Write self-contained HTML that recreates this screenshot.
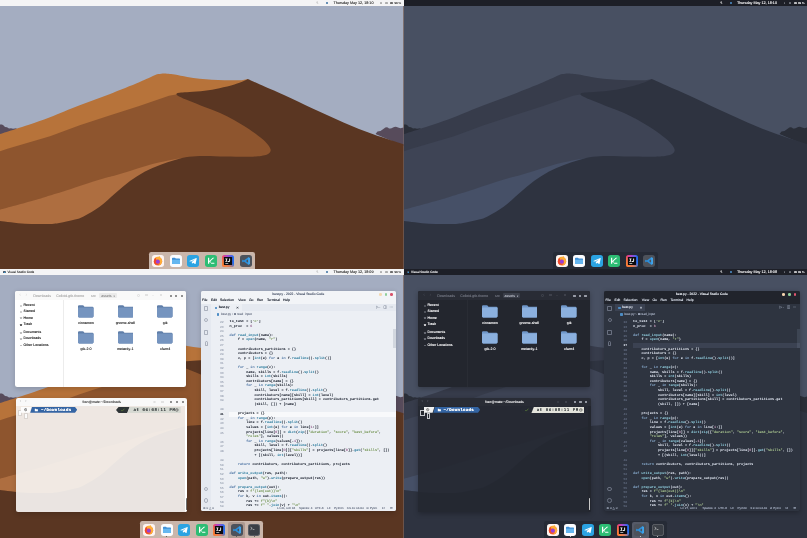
<!DOCTYPE html>
<html lang="en"><head><meta charset="utf-8"><title>Colloid desktop</title>
<style>
*{box-sizing:border-box;margin:0;padding:0}
html,body{width:807px;height:538px;overflow:hidden;background:#5a3622;font-family:"Liberation Sans",sans-serif}
#root{position:absolute;left:0;top:0;width:807px;height:538px;will-change:transform;overflow:hidden;text-rendering:geometricPrecision}
.q{position:absolute;width:403.5px;height:269px;overflow:hidden}
.q.tl{left:0;top:0}.q.tr{left:403.5px;top:0}.q.bl{left:0;top:269px}.q.br{left:403.5px;top:269px}
.wp{position:absolute;left:0;top:0;width:403.5px;height:269px;display:block}
.tb{position:absolute;left:0;top:0;width:403.5px;height:5.6px;background:var(--bar);color:var(--bartext);font-size:3.72px;line-height:7.3px;white-space:nowrap;overflow:hidden;text-shadow:0 0 0.25px currentColor}
.tb span,.tb i,.tb svg{position:absolute;top:0}
.tb-app{left:3.2px;top:1.5px!important;width:2.8px;height:2.8px}
.tb-app svg{width:2.8px;height:2.8px;display:block}
.tb-title{left:7.5px;font-size:3.15px}
.tb-clock{left:333.4px}
.tb-i{top:1.4px!important;width:2.8px;height:2.8px;color:var(--barmuted);opacity:.6}
.tb-dot{top:1.7px!important;width:2.2px;height:2.2px;border-radius:50%;background:#3a6f9f}
.tb-s{top:2.1px!important;height:1.5px;background:var(--barmuted);border-radius:0.4px;opacity:.8}
.tb-s.b{background:var(--bartext)}
.dark .tb-i{opacity:1;color:#f2f2f2}
.dark .tb-dot{background:#4f93cf}
.tb-pct{left:394.4px;font-size:3px}
.dock{position:absolute;top:252px;height:17.5px;background:var(--dock);border-radius:2.2px 2.2px 0 0}
.dock .ic{position:absolute;top:2.6px;width:12px;height:12px}
.dock .ic svg{display:block;width:12px;height:12px}
.dock .act{position:absolute;top:0.6px;width:16.6px;height:17.4px;background:var(--dockactive);border-radius:2px}
.dock .dot{position:absolute;top:15.4px;width:1px;height:1px;border-radius:50%;background:var(--bartext)}

.light{--win:#ffffff;--hb:#f9f9f9;--hbt:#b4b4b4;--txt:#3a3a3a;--muted:#9b9b9b;--pbtn:#ebebeb;--pbt:#9a9a9a;--wb:#8a8a8a;--div:#ececec;
 --fold1:#7594bf;--fold2:#5f7ea9;--shadow:0 1.2px 5px rgba(0,0,0,.16),0 0 0.5px rgba(0,0,0,.16);
 --tbody:rgba(247,245,243,.915);--tsb:#ffffff;--thumb:#6b6b6b;--rs1:#2e3436;--rs2:#d6d9d2;--brk:#fbfbfb;--bx:#d9d4d0;--osbg:#fcfcfc;--ttl:#555;
 --vsbg:#eceff4;--vstb:#f2f4f7;--vsab:#e5e9f0;--vstabs:#e5e9f0;--vstab:#eceff4;--vsfg:#2e3440;--vstt:#596377;--vsln:#aab1bf;--vsmuted:#7b8394;--vscl:#f8f9fb;
 --k:#5e81ac;--f:#3f87a6;--s:#7a9a5c;--n:#a0709a;--cby:#f4d9b0;--cbg:#8fcf9a;--cbr:#d8546c}
.dark{--win:#23262e;--hb:#292c35;--hbt:#6b6f7a;--txt:#f0f0f2;--muted:#8a8e99;--pbtn:#3a3e49;--pbt:#a9adb8;--wb:#9a9ea9;--div:#292c34;
 --fold1:#8bb0de;--fold2:#6f97c9;--shadow:0 1.2px 5px rgba(0,0,0,.25),0 0 0.5px rgba(0,0,0,.35);
 --tbody:rgba(36,39,48,.9);--tsb:#23262e;--thumb:#c9c9c9;--rs1:#262a33;--rs2:#e4e4dc;--brk:#23262e;--bx:#c4c6cc;--osbg:#f2f2f2;--ttl:#e6e6e8;
 --vsbg:#2e3440;--vstb:#21242c;--vsab:#2e3440;--vstabs:#2e3440;--vstab:#3b4252;--vsfg:#d8dee9;--vstt:#e5e9f0;--vsln:#5b6478;--vsmuted:#9aa3b5;--vscl:#3b4252;
 --k:#81a1c1;--f:#88c0d0;--s:#a3be8c;--n:#b48ead;--cby:#f4d3ae;--cbg:#8fd19e;--cbr:#e0566f}
.win{position:absolute;border-radius:2.1px;box-shadow:var(--shadow);overflow:hidden;color:var(--txt);font-size:3.5px;text-shadow:0 0 0.4px currentColor}
.win i{position:absolute;display:block;font-style:normal}
.win span{position:absolute;white-space:nowrap}
/* ---- file manager */
.fm{left:15px;top:21.6px;width:170.9px;height:96.1px;background:var(--win)}
.hb{position:absolute;left:0;top:0;right:0;height:9.4px;background:var(--hb);line-height:10.4px;color:var(--hbt);overflow:hidden}
.hb .nav{font-size:5px;top:-0.5px;opacity:.28}
.hb .pth{font-size:3.6px}
.hb .pbtn{top:2.2px;height:5.6px;line-height:6.4px;overflow:hidden;width:17.4px;margin-left:0.6px;padding-left:2px;border-radius:1px;background:var(--pbtn);color:var(--pbt);font-size:3.6px}
.hb .pbtn em{font-style:normal;font-size:2.6px;position:relative;left:1px}
.hb .hi{top:3.6px;width:2.4px;height:2.4px;opacity:.32}
.hb .hi.r{border:0.5px solid var(--hbt);border-radius:50%}
.hb .hi.l{border-top:0.5px solid var(--hbt);border-bottom:0.5px solid var(--hbt);height:2.2px;top:3.6px}
.hb .hi.v{width:0;height:0;border-left:1px solid transparent;border-right:1px solid transparent;border-top:1.2px solid var(--hbt);top:4.2px}
.hb .hi.m{border-top:0.5px solid var(--hbt);border-bottom:0.5px solid var(--hbt);height:2.4px;top:3.5px}
.wb{top:4.2px;width:2px;height:2px;margin-left:0.35px;border-radius:50%;background:var(--wb);box-shadow:0 0 0.45px var(--wb)}
.fm .sb{position:absolute;left:0;top:9.4px;width:49.2px;bottom:0;border-right:0.3px solid var(--div)}
.fm .sr{position:absolute;left:8.4px;height:4.8px;line-height:4.8px;white-space:nowrap;font-size:3.55px}
.fm .si{left:-3.6px;top:1.4px;width:2.1px;height:2.1px;border:0.4px solid var(--muted);border-radius:50%;opacity:.7}
.fm .si.t{background:var(--txt);border-radius:0.4px;border:0;opacity:.85;width:1.8px;left:-3.4px}
.fm .si.d,.fm .si.h{border-radius:0.4px;border-width:0.5px 0.4px}
.fm .si.p{border:0;width:2.3px;height:0.5px;top:2.2px;background:var(--muted)}
.fm .fo{position:absolute;width:60px;text-align:center}
.fm .fo svg{display:block;width:15.5px;height:12.5px;margin:0 auto}
.fm .fo span{position:static;display:block;margin-top:3.5px;line-height:4.4px;font-size:3.55px}
/* ---- terminal */
.tm{left:16.1px;top:128.5px;width:171.4px;height:114.1px}
.dark .tm{left:14.5px;width:173px}
.dark .tm .brk,.dark .tm .cur,.dark .tm .os,.dark .tm .seg,.dark .tm .segt{margin-left:.8px}
.dark .tm .wb{margin-left:1.6px}
.dark .tm .hi,.dark .tm .rseg,.dark .tm .rsegt{margin-left:1.25px}
.dark .fm{left:14.7px;width:172px}
.dark .fm .sb,.dark .fm .fo,.dark .fm .hb>*{margin-left:.8px}
.dark .wb{width:2.4px;height:2.4px;margin-left:0.15px;margin-top:-0.2px}
.tm .hb{height:8.2px;line-height:8.6px}
.tm .hb .nav{font-size:4.4px;top:-0.4px;opacity:.6}
.tm .ttl{left:0;right:0;text-align:center;color:var(--ttl);font-size:3.5px}
.tm .hb .hi{top:3.2px}.tm .hb .hi.m{top:3.3px}
.tm .wb{top:3.5px}
.tm .body{position:absolute;left:0;right:0;top:8.2px;bottom:0;background:var(--tbody);font-family:"Liberation Mono",monospace}
.tm .brk{left:1.5px;top:4px;width:4.8px;height:6.4px;border:0.3px solid var(--bx);background:var(--brk)}
.tm .cur{left:8.3px;top:7.5px;width:3.2px;height:5.5px;border:0.3px solid var(--bx);background:var(--brk)}
.tm .os{left:7.6px;top:2.7px;width:3.3px;height:3.3px;color:#333}
.tm .os svg{display:block;width:3.3px;height:3.3px}
.tm .seg{position:absolute;left:5px;top:1.5px;width:56.2px;height:5.7px}
.tm .segt{left:24.8px;top:3.25px;line-height:5.6px;font-size:4.1px;font-weight:bold;color:#fff;letter-spacing:0.32px}
.tm .rseg{position:absolute;left:100.4px;top:1.4px;width:64.6px;height:5.9px}
.tm .rsegt{left:117.4px;top:3.25px;line-height:5.9px;font-size:4.1px;color:#2e3436;letter-spacing:0.55px}
.tm .scr{right:0;top:0;bottom:0;width:2.7px;background:var(--tsb)}
.tm .thumb{right:0.9px;bottom:1.4px;width:0.9px;height:12px;background:var(--thumb);border-radius:0.5px}
/* ---- vscode */
.vs{left:200.7px;top:21.6px;width:195.4px;height:220.4px;background:var(--vsbg);color:var(--vsfg)}
.vs .tbar{position:absolute;left:0;right:0;top:0;height:6.8px;background:var(--vstb);text-align:center;line-height:7.6px;font-size:3.3px}
.vs .tbar span{position:static;color:var(--vstt)}
.vs .cb{top:2.3px;width:2.7px;height:2.7px;border-radius:50%}
.vs .cb.y{background:var(--cby)}.vs .cb.g{background:var(--cbg)}.vs .cb.r{background:var(--cbr)}
.vs .menu{position:absolute;left:0;right:0;top:6.8px;height:6.3px;background:var(--vstb);line-height:7.4px;font-size:3.45px;overflow:hidden}
.vs .ab{position:absolute;left:0;top:13.1px;width:10.8px;bottom:4.4px;background:var(--vsab)}
.vs .ab i{left:3.2px;width:4.4px;height:5px;border:0.5px solid var(--vsmuted);border-radius:0.8px;opacity:.55}
.vs .ab .a2{border-radius:50%;width:4px;height:4px;left:3.6px}
.vs .ab .a4{width:3px;left:3.9px;border-radius:1.4px 1.4px 0 0}
.vs .ab .a5,.vs .ab .a6{border-radius:50%;width:4.6px;height:4.6px;left:3.1px}
.vs .tabs{position:absolute;left:10.8px;right:0;top:13.1px;height:7.4px;background:var(--vstabs)}
.vs .tab{position:absolute;left:0;top:0;width:30.4px;height:7.4px;background:var(--vstab);line-height:7.6px;padding-left:7.2px;font-size:3.3px;overflow:hidden}
.vs .tab em{position:absolute;right:3.2px;top:0;font-style:normal;font-size:4.2px}
.vs .py{left:3.2px;top:2.9px;width:2.4px;height:2.4px;border-radius:0.7px;background:#4c8cc4}
.vs .tact{right:3.2px;top:0;line-height:7.6px;font-size:3.4px;color:var(--vsmuted)}
.vs .tact small{font-size:2.4px}
.vs .bc{position:absolute;left:10.8px;top:20.5px;height:7px;right:0;line-height:6.5px;padding-left:9.6px;font-size:3.1px;color:var(--vsmuted);white-space:nowrap}
.vs .bc .py{left:5.4px;top:2.2px}
.vs .bc .cube{position:static;display:inline-block;width:2.2px;height:2.2px;border:0.45px solid var(--vsmuted);border-radius:0.5px;margin:0 0.7px -0.2px 0.4px}
.vs .ed{position:absolute;left:10.8px;right:0;top:29.3px;bottom:4.4px;font-family:"Liberation Mono",monospace;font-size:3.36px;line-height:4.6235px;overflow:hidden}
.vs .cl{left:18px;right:0;height:4.62px;background:var(--vscl)}
.vs .ln{position:absolute;left:0;top:0;width:12.2px;text-align:right;color:var(--vsln);font-size:3.1px}
.vs .ln .c{color:var(--vsfg)}
.vs .code{position:absolute;left:18.1px;top:0;margin:0;font-family:"Liberation Mono",monospace;font-size:3.4px;line-height:4.6235px;letter-spacing:0.04px}
.vs .code b{font-weight:normal}
.vs .code div,.vs .ln div{height:4.6235px}
.vs .k{color:var(--k)}.vs .f{color:var(--f)}.vs .s{color:var(--s)}.vs .n{color:var(--n)}
.vs .vsb{right:0;top:9.3px;width:2.6px;height:19px;background:rgba(120,130,150,.22)}
.vs .stat{position:absolute;left:0;right:0;bottom:0;height:4.4px;background:var(--vsbg);line-height:3.5px;font-size:3.05px;color:var(--vsmuted);overflow:hidden}
</style></head>
<body>
<div id="root">
<div class="q tl light" style="--bar:#f4f4f5;--bartext:#4a4a4a;--barmuted:#9a9a9a;--dock:rgba(238,222,214,0.76);--dockactive:rgba(120,100,95,0.35)"><svg class="wp" viewBox="0 0 403.5 269" preserveAspectRatio="none"><rect width="403.5" height="269" fill="#a4adc1"/><path d="M0 124.6 L2 124.4 L3.6 125.4 L5 127 L7 127.2 L9 128.4 L11 128.2 L13 128.8 L16.5 128.3 L16.5 131 L0 137 Z" fill="#574b5b"/><path d="M375.5 134 L377.5 131.4 L380.5 131 L384 128.6 Q386.6 126.2 389 128.4 Q391 129 393 127.6 Q395.5 125.8 398 127.6 L400.5 128.2 L403.5 127.4 L403.5 146 Z" fill="#574b5b"/><path d="M0 134 C2.50 133.20 10.05 130.78 15.00 129.20 C19.95 127.62 23.87 126.50 29.70 124.50 C35.53 122.50 41.67 120.40 50.00 117.20 C58.33 114.00 69.78 109.13 79.70 105.30 C89.62 101.47 99.58 98.03 109.50 94.20 C119.42 90.37 131.77 85.40 139.20 82.30 C146.63 79.20 150.88 76.97 154.10 75.60 C157.32 74.23 156.93 74.47 158.50 74.10 C160.07 73.73 162.67 73.52 163.50 73.40 C164.33 73.45 166.62 73.52 168.50 73.70 C170.38 73.88 171.68 73.97 174.80 74.50 C177.92 75.03 183.07 76.20 187.20 76.90 C191.33 77.60 195.47 78.23 199.60 78.70 C203.73 79.17 207.88 79.45 212.00 79.70 C216.12 79.95 220.18 80.10 224.30 80.20 C228.42 80.30 233.58 80.35 236.70 80.30 C239.82 80.25 241.17 80.12 243.00 79.90 C244.83 79.68 246.92 79.15 247.70 79.00 L247.7 269 L0 269 Z" fill="#b7733a"/><path d="M0 151.2 L7.4 148.8 L50 136.2 L79.7 125.2 L109.5 115.6 L139.2 105.9 L169 95.8 L177.2 94.2 L230 100 L275 140 L275 269 L0 269 Z" fill="#8e552e"/><path d="M0 209.8 C5.58 208.27 25.17 202.98 33.50 200.60 C41.83 198.22 44.43 197.23 50.00 195.50 C55.57 193.77 58.57 192.88 66.90 190.20 C75.23 187.52 91.98 181.87 100.00 179.40 C108.02 176.93 110.00 176.80 115.00 175.40 C120.00 174.00 125.00 172.53 130.00 171.00 C135.00 169.47 140.00 167.65 145.00 166.20 C150.00 164.75 154.83 163.50 160.00 162.30 C165.17 161.10 171.00 159.80 176.00 159.00 C181.00 158.20 187.67 157.75 190.00 157.50 L190 269 L0 269 Z" fill="#ae6e40"/><path d="M247.7 79 C246.97 79.38 245.52 80.38 243.30 81.30 C241.08 82.22 238.37 83.35 234.40 84.50 C230.43 85.65 224.47 87.17 219.50 88.20 C214.53 89.23 209.57 90.08 204.60 90.70 C199.63 91.32 193.63 91.60 189.70 91.90 C185.77 92.20 183.02 92.30 181.00 92.50 C178.98 92.70 178.37 92.80 177.60 93.10 C176.83 93.40 176.37 93.87 176.40 94.30 C176.43 94.73 176.82 95.10 177.80 95.70 C178.78 96.30 180.32 97.03 182.30 97.90 C184.28 98.77 185.98 99.40 189.70 100.90 C193.42 102.40 199.63 104.92 204.60 106.90 C209.57 108.88 214.53 110.58 219.50 112.80 C224.47 115.02 229.45 117.47 234.40 120.20 C239.35 122.93 244.75 126.22 249.20 129.20 C253.65 132.18 257.97 135.50 261.10 138.10 C264.23 140.70 266.42 142.88 268.00 144.80 C269.58 146.72 270.30 148.30 270.60 149.60 C270.90 150.90 270.38 151.77 269.80 152.60 C269.22 153.43 268.55 154.03 267.10 154.60 C265.65 155.17 264.08 155.65 261.10 156.00 C258.12 156.35 255.22 156.63 249.20 156.70 C243.18 156.77 232.53 156.53 225.00 156.40 C217.47 156.27 210.00 155.83 204.00 155.90 C198.00 155.97 193.83 156.13 189.00 156.80 C184.17 157.47 179.83 158.53 175.00 159.90 C170.17 161.27 165.00 163.07 160.00 165.00 C155.00 166.93 150.00 168.83 145.00 171.50 C140.00 174.17 135.00 177.35 130.00 181.00 C125.00 184.65 120.00 189.15 115.00 193.40 C110.00 197.65 105.17 202.70 100.00 206.50 C94.83 210.30 88.17 214.02 84.00 216.20 C79.83 218.38 78.67 218.57 75.00 219.60 C71.33 220.63 66.17 221.68 62.00 222.40 C57.83 223.12 56.17 223.67 50.00 223.90 C43.83 224.13 33.33 224.27 25.00 223.80 C16.67 223.33 4.17 221.55 0.00 221.10 L0 269 L403.5 269 L403.5 144.2 C398.45 142.55 383.20 137.93 373.20 134.30 C363.20 130.67 353.42 126.62 343.50 122.40 C333.58 118.18 323.62 113.58 313.70 109.00 C303.78 104.42 292.95 99.00 284.00 94.90 C275.05 90.80 266.05 87.05 260.00 84.40 C253.95 81.75 249.75 79.90 247.70 79.00 Z" fill="#5a3622"/></svg><div class="tb"><svg class="tb-i" style="left:316.4px" viewBox="0 0 10 10"><path d="M6.5 1 A4 4 0 1 0 9 7 A3.4 3.4 0 0 1 6.5 1Z" fill="currentColor"/></svg><i class="tb-dot" style="left:326px"></i><span class="tb-clock">Thursday May 12, 18:10</span><i class="tb-s" style="left:380.2px;width:1.8px"></i><i class="tb-s" style="left:385.2px;width:2.4px"></i><i class="tb-s b" style="left:390.4px;width:3px"></i><span class="tb-pct">99 %</span></div><div class="dock" style="left:149.00px;width:105.50px"><span class="ic" style="left:3.00px"><svg viewBox="0 0 24 24"><rect width="24" height="24" rx="5.5" fill="#fdf4f1"/><g transform="translate(12 12.4) scale(1.13) translate(-12 -12.4)"><circle cx="12" cy="12.6" r="7.4" fill="#f7772b"/><path d="M5.2 9.5 C6 6 9 4.2 12.4 4.6 C13.6 3.6 14.6 3.4 15.4 3.6 C15.2 4.6 15.6 5.4 16.6 6.2 C18.6 7.8 19.5 10.2 19.3 12.9 C19 17 15.8 20 12 20 C15 18.6 16.4 15.6 15.4 12.6 C14.6 10.2 12 9.2 10 10.2 C8.8 9 7 8.6 5.2 9.5Z" fill="#ffae38"/><circle cx="11.6" cy="13.2" r="3.7" fill="#9a3fd6"/><path d="M4.7 12 C5 9 6.8 7 9 6.4 C8 8 8.4 9.6 9.6 10.6 C8 11.4 7.6 13.6 8.6 15.4 C9.6 17.2 11.6 17.8 13.4 17.2 C12 19.4 8.4 19.4 6.4 17.4 C5 16 4.5 14 4.7 12Z" fill="#f0472e"/></g></svg></span><span class="ic" style="left:20.50px"><svg viewBox="0 0 24 24"><rect width="24" height="24" rx="5.5" fill="#fbfcfe"/><path d="M4 6.8 Q4 5.4 5.4 5.4 L9.4 5.4 Q10.2 5.4 10.7 6.1 L11.4 7 L18.6 7 Q20 7 20 8.4 L20 16.8 Q20 18.2 18.6 18.2 L5.4 18.2 Q4 18.2 4 16.8Z" fill="#3f8fd6"/><path d="M4 9.4 L20 9.4 L20 16.8 Q20 18.2 18.6 18.2 L5.4 18.2 Q4 18.2 4 16.8Z" fill="#66b7f0"/></svg></span><span class="ic" style="left:38.00px"><svg viewBox="0 0 24 24"><rect width="24" height="24" rx="5.5" fill="#2ba3e2"/><path d="M4.6 11.8 L18.6 6.2 Q19.6 5.9 19.4 7 L17.2 17.6 Q17 18.6 16 18 L12.4 15.4 L10.6 17.2 Q10 17.7 9.9 16.9 L9.6 13.8 L16.2 8.4 L8.2 13.2 L4.8 12.6 Q4 12.2 4.6 11.8Z" fill="#fff"/></svg></span><span class="ic" style="left:55.50px"><svg viewBox="0 0 24 24"><rect width="24" height="24" rx="5.5" fill="#2dbd74"/><path d="M6 5.5 L8.4 5.5 L8.4 12 L15.6 5.5 L18.6 5.5 L10.6 12.6 L12.4 14.8 L9.8 14.8 L8.4 13.2 L8.4 17.4 L6 17.4Z" fill="#fff"/><rect x="12.2" y="15.4" width="6.6" height="2" rx="0.6" fill="#fff"/></svg></span><span class="ic" style="left:73.00px"><svg viewBox="0 0 24 24"><defs><linearGradient id="ijgtl" x1="0" y1="0" x2="1" y2="0"><stop offset="0" stop-color="#f5376a"/><stop offset="0.4" stop-color="#b044c8"/><stop offset="1" stop-color="#1673f5"/></linearGradient><linearGradient id="ijotl" x1="0" y1="1" x2="0.55" y2="0.35"><stop offset="0" stop-color="#fb8a2a"/><stop offset="0.55" stop-color="#fb8a2a" stop-opacity="0.7"/><stop offset="1" stop-color="#fb8a2a" stop-opacity="0"/></linearGradient></defs><rect width="24" height="24" rx="5" fill="url(#ijgtl)"/><rect width="24" height="24" rx="5" fill="url(#ijotl)"/><rect x="3.8" y="3.8" width="16.4" height="16.4" rx="1" fill="#0b0b0f"/><path d="M6.6 6.8 H11 V8.4 H9.7 V12 H11 V13.6 H6.6 V12 H7.9 V8.4 H6.6Z" fill="#fff"/><path d="M14.4 6.8 H16.2 V11.4 Q16.2 13.8 13.8 13.8 Q12.4 13.8 11.7 12.8 L12.9 11.6 Q13.3 12.2 13.8 12.2 Q14.4 12.2 14.4 11.2Z" fill="#fff"/><rect x="6.6" y="16.2" width="6" height="1.3" fill="#fff"/></svg></span><span class="ic" style="left:90.50px"><svg viewBox="0 0 24 24"><rect width="24" height="24" rx="5.5" fill="#4d525b"/><path d="M16.6 4.4 L19.8 5.9 V18.1 L16.6 19.6 L7.8 13 L5.8 14.6 L4.4 13.9 V10.1 L5.8 9.4 L7.8 11 Z M16.6 8.6 L11.8 12 L16.6 15.4Z" fill="#2b8fdc" fill-rule="evenodd"/><path d="M16.6 4.4 L19.8 5.9 V18.1 L16.6 19.6Z" fill="#45a8ee"/></svg></span></div></div>
<div class="q tr dark" style="--bar:#1d1f27;--bartext:#e8e8ea;--barmuted:#8a8d96;--dock:rgba(36,40,50,0.7);--dockactive:rgba(150,156,172,0.42)"><svg class="wp" viewBox="0 0 403.5 269" preserveAspectRatio="none"><rect width="403.5" height="269" fill="#485062"/><path d="M0 124.6 L2 124.4 L3.6 125.4 L5 127 L7 127.2 L9 128.4 L11 128.2 L13 128.8 L16.5 128.3 L16.5 131 L0 137 Z" fill="#2a2e38"/><path d="M375.5 134 L377.5 131.4 L380.5 131 L384 128.6 Q386.6 126.2 389 128.4 Q391 129 393 127.6 Q395.5 125.8 398 127.6 L400.5 128.2 L403.5 127.4 L403.5 146 Z" fill="#2a2e38"/><path d="M0 134 C2.50 133.20 10.05 130.78 15.00 129.20 C19.95 127.62 23.87 126.50 29.70 124.50 C35.53 122.50 41.67 120.40 50.00 117.20 C58.33 114.00 69.78 109.13 79.70 105.30 C89.62 101.47 99.58 98.03 109.50 94.20 C119.42 90.37 131.77 85.40 139.20 82.30 C146.63 79.20 150.88 76.97 154.10 75.60 C157.32 74.23 156.93 74.47 158.50 74.10 C160.07 73.73 162.67 73.52 163.50 73.40 C164.33 73.45 166.62 73.52 168.50 73.70 C170.38 73.88 171.68 73.97 174.80 74.50 C177.92 75.03 183.07 76.20 187.20 76.90 C191.33 77.60 195.47 78.23 199.60 78.70 C203.73 79.17 207.88 79.45 212.00 79.70 C216.12 79.95 220.18 80.10 224.30 80.20 C228.42 80.30 233.58 80.35 236.70 80.30 C239.82 80.25 241.17 80.12 243.00 79.90 C244.83 79.68 246.92 79.15 247.70 79.00 L247.7 269 L0 269 Z" fill="#373c4b"/><path d="M0 151.2 L7.4 148.8 L50 136.2 L79.7 125.2 L109.5 115.6 L139.2 105.9 L169 95.8 L177.2 94.2 L230 100 L275 140 L275 269 L0 269 Z" fill="#3e4455"/><path d="M0 209.8 C5.58 208.27 25.17 202.98 33.50 200.60 C41.83 198.22 44.43 197.23 50.00 195.50 C55.57 193.77 58.57 192.88 66.90 190.20 C75.23 187.52 91.98 181.87 100.00 179.40 C108.02 176.93 110.00 176.80 115.00 175.40 C120.00 174.00 125.00 172.53 130.00 171.00 C135.00 169.47 140.00 167.65 145.00 166.20 C150.00 164.75 154.83 163.50 160.00 162.30 C165.17 161.10 171.00 159.80 176.00 159.00 C181.00 158.20 187.67 157.75 190.00 157.50 L190 269 L0 269 Z" fill="#465067"/><path d="M247.7 79 C246.97 79.38 245.52 80.38 243.30 81.30 C241.08 82.22 238.37 83.35 234.40 84.50 C230.43 85.65 224.47 87.17 219.50 88.20 C214.53 89.23 209.57 90.08 204.60 90.70 C199.63 91.32 193.63 91.60 189.70 91.90 C185.77 92.20 183.02 92.30 181.00 92.50 C178.98 92.70 178.37 92.80 177.60 93.10 C176.83 93.40 176.37 93.87 176.40 94.30 C176.43 94.73 176.82 95.10 177.80 95.70 C178.78 96.30 180.32 97.03 182.30 97.90 C184.28 98.77 185.98 99.40 189.70 100.90 C193.42 102.40 199.63 104.92 204.60 106.90 C209.57 108.88 214.53 110.58 219.50 112.80 C224.47 115.02 229.45 117.47 234.40 120.20 C239.35 122.93 244.75 126.22 249.20 129.20 C253.65 132.18 257.97 135.50 261.10 138.10 C264.23 140.70 266.42 142.88 268.00 144.80 C269.58 146.72 270.30 148.30 270.60 149.60 C270.90 150.90 270.38 151.77 269.80 152.60 C269.22 153.43 268.55 154.03 267.10 154.60 C265.65 155.17 264.08 155.65 261.10 156.00 C258.12 156.35 255.22 156.63 249.20 156.70 C243.18 156.77 232.53 156.53 225.00 156.40 C217.47 156.27 210.00 155.83 204.00 155.90 C198.00 155.97 193.83 156.13 189.00 156.80 C184.17 157.47 179.83 158.53 175.00 159.90 C170.17 161.27 165.00 163.07 160.00 165.00 C155.00 166.93 150.00 168.83 145.00 171.50 C140.00 174.17 135.00 177.35 130.00 181.00 C125.00 184.65 120.00 189.15 115.00 193.40 C110.00 197.65 105.17 202.70 100.00 206.50 C94.83 210.30 88.17 214.02 84.00 216.20 C79.83 218.38 78.67 218.57 75.00 219.60 C71.33 220.63 66.17 221.68 62.00 222.40 C57.83 223.12 56.17 223.67 50.00 223.90 C43.83 224.13 33.33 224.27 25.00 223.80 C16.67 223.33 4.17 221.55 0.00 221.10 L0 269 L403.5 269 L403.5 144.2 C398.45 142.55 383.20 137.93 373.20 134.30 C363.20 130.67 353.42 126.62 343.50 122.40 C333.58 118.18 323.62 113.58 313.70 109.00 C303.78 104.42 292.95 99.00 284.00 94.90 C275.05 90.80 266.05 87.05 260.00 84.40 C253.95 81.75 249.75 79.90 247.70 79.00 Z" fill="#2e3340"/></svg><div class="tb"><svg class="tb-i" style="left:316.4px" viewBox="0 0 10 10"><path d="M6.5 1 A4 4 0 1 0 9 7 A3.4 3.4 0 0 1 6.5 1Z" fill="currentColor"/></svg><i class="tb-dot" style="left:326px"></i><span class="tb-clock">Thursday May 12, 18:10</span><i class="tb-s" style="left:380.2px;width:1.8px"></i><i class="tb-s" style="left:385.2px;width:2.4px"></i><i class="tb-s b" style="left:390.4px;width:3px"></i><span class="tb-pct">99 %</span></div><div class="dock" style="left:149.00px;width:105.50px"><span class="ic" style="left:3.00px"><svg viewBox="0 0 24 24"><rect width="24" height="24" rx="5.5" fill="#fdf4f1"/><g transform="translate(12 12.4) scale(1.13) translate(-12 -12.4)"><circle cx="12" cy="12.6" r="7.4" fill="#f7772b"/><path d="M5.2 9.5 C6 6 9 4.2 12.4 4.6 C13.6 3.6 14.6 3.4 15.4 3.6 C15.2 4.6 15.6 5.4 16.6 6.2 C18.6 7.8 19.5 10.2 19.3 12.9 C19 17 15.8 20 12 20 C15 18.6 16.4 15.6 15.4 12.6 C14.6 10.2 12 9.2 10 10.2 C8.8 9 7 8.6 5.2 9.5Z" fill="#ffae38"/><circle cx="11.6" cy="13.2" r="3.7" fill="#9a3fd6"/><path d="M4.7 12 C5 9 6.8 7 9 6.4 C8 8 8.4 9.6 9.6 10.6 C8 11.4 7.6 13.6 8.6 15.4 C9.6 17.2 11.6 17.8 13.4 17.2 C12 19.4 8.4 19.4 6.4 17.4 C5 16 4.5 14 4.7 12Z" fill="#f0472e"/></g></svg></span><span class="ic" style="left:20.50px"><svg viewBox="0 0 24 24"><rect width="24" height="24" rx="5.5" fill="#fbfcfe"/><path d="M4 6.8 Q4 5.4 5.4 5.4 L9.4 5.4 Q10.2 5.4 10.7 6.1 L11.4 7 L18.6 7 Q20 7 20 8.4 L20 16.8 Q20 18.2 18.6 18.2 L5.4 18.2 Q4 18.2 4 16.8Z" fill="#3f8fd6"/><path d="M4 9.4 L20 9.4 L20 16.8 Q20 18.2 18.6 18.2 L5.4 18.2 Q4 18.2 4 16.8Z" fill="#66b7f0"/></svg></span><span class="ic" style="left:38.00px"><svg viewBox="0 0 24 24"><rect width="24" height="24" rx="5.5" fill="#2ba3e2"/><path d="M4.6 11.8 L18.6 6.2 Q19.6 5.9 19.4 7 L17.2 17.6 Q17 18.6 16 18 L12.4 15.4 L10.6 17.2 Q10 17.7 9.9 16.9 L9.6 13.8 L16.2 8.4 L8.2 13.2 L4.8 12.6 Q4 12.2 4.6 11.8Z" fill="#fff"/></svg></span><span class="ic" style="left:55.50px"><svg viewBox="0 0 24 24"><rect width="24" height="24" rx="5.5" fill="#2dbd74"/><path d="M6 5.5 L8.4 5.5 L8.4 12 L15.6 5.5 L18.6 5.5 L10.6 12.6 L12.4 14.8 L9.8 14.8 L8.4 13.2 L8.4 17.4 L6 17.4Z" fill="#fff"/><rect x="12.2" y="15.4" width="6.6" height="2" rx="0.6" fill="#fff"/></svg></span><span class="ic" style="left:73.00px"><svg viewBox="0 0 24 24"><defs><linearGradient id="ijgtr" x1="0" y1="0" x2="1" y2="0"><stop offset="0" stop-color="#f5376a"/><stop offset="0.4" stop-color="#b044c8"/><stop offset="1" stop-color="#1673f5"/></linearGradient><linearGradient id="ijotr" x1="0" y1="1" x2="0.55" y2="0.35"><stop offset="0" stop-color="#fb8a2a"/><stop offset="0.55" stop-color="#fb8a2a" stop-opacity="0.7"/><stop offset="1" stop-color="#fb8a2a" stop-opacity="0"/></linearGradient></defs><rect width="24" height="24" rx="5" fill="url(#ijgtr)"/><rect width="24" height="24" rx="5" fill="url(#ijotr)"/><rect x="3.8" y="3.8" width="16.4" height="16.4" rx="1" fill="#0b0b0f"/><path d="M6.6 6.8 H11 V8.4 H9.7 V12 H11 V13.6 H6.6 V12 H7.9 V8.4 H6.6Z" fill="#fff"/><path d="M14.4 6.8 H16.2 V11.4 Q16.2 13.8 13.8 13.8 Q12.4 13.8 11.7 12.8 L12.9 11.6 Q13.3 12.2 13.8 12.2 Q14.4 12.2 14.4 11.2Z" fill="#fff"/><rect x="6.6" y="16.2" width="6" height="1.3" fill="#fff"/></svg></span><span class="ic" style="left:90.50px"><svg viewBox="0 0 24 24"><rect width="24" height="24" rx="5.5" fill="#4d525b"/><path d="M16.6 4.4 L19.8 5.9 V18.1 L16.6 19.6 L7.8 13 L5.8 14.6 L4.4 13.9 V10.1 L5.8 9.4 L7.8 11 Z M16.6 8.6 L11.8 12 L16.6 15.4Z" fill="#2b8fdc" fill-rule="evenodd"/><path d="M16.6 4.4 L19.8 5.9 V18.1 L16.6 19.6Z" fill="#45a8ee"/></svg></span></div></div>
<div class="q bl light" style="--bar:#f4f4f5;--bartext:#4a4a4a;--barmuted:#9a9a9a;--dock:rgba(238,222,214,0.76);--dockactive:rgba(120,100,95,0.35)"><svg class="wp" viewBox="0 0 403.5 269" preserveAspectRatio="none"><rect width="403.5" height="269" fill="#a4adc1"/><path d="M0 124.6 L2 124.4 L3.6 125.4 L5 127 L7 127.2 L9 128.4 L11 128.2 L13 128.8 L16.5 128.3 L16.5 131 L0 137 Z" fill="#574b5b"/><path d="M375.5 134 L377.5 131.4 L380.5 131 L384 128.6 Q386.6 126.2 389 128.4 Q391 129 393 127.6 Q395.5 125.8 398 127.6 L400.5 128.2 L403.5 127.4 L403.5 146 Z" fill="#574b5b"/><path d="M0 134 C2.50 133.20 10.05 130.78 15.00 129.20 C19.95 127.62 23.87 126.50 29.70 124.50 C35.53 122.50 41.67 120.40 50.00 117.20 C58.33 114.00 69.78 109.13 79.70 105.30 C89.62 101.47 99.58 98.03 109.50 94.20 C119.42 90.37 131.77 85.40 139.20 82.30 C146.63 79.20 150.88 76.97 154.10 75.60 C157.32 74.23 156.93 74.47 158.50 74.10 C160.07 73.73 162.67 73.52 163.50 73.40 C164.33 73.45 166.62 73.52 168.50 73.70 C170.38 73.88 171.68 73.97 174.80 74.50 C177.92 75.03 183.07 76.20 187.20 76.90 C191.33 77.60 195.47 78.23 199.60 78.70 C203.73 79.17 207.88 79.45 212.00 79.70 C216.12 79.95 220.18 80.10 224.30 80.20 C228.42 80.30 233.58 80.35 236.70 80.30 C239.82 80.25 241.17 80.12 243.00 79.90 C244.83 79.68 246.92 79.15 247.70 79.00 L247.7 269 L0 269 Z" fill="#b7733a"/><path d="M0 151.2 L7.4 148.8 L50 136.2 L79.7 125.2 L109.5 115.6 L139.2 105.9 L169 95.8 L177.2 94.2 L230 100 L275 140 L275 269 L0 269 Z" fill="#8e552e"/><path d="M0 209.8 C5.58 208.27 25.17 202.98 33.50 200.60 C41.83 198.22 44.43 197.23 50.00 195.50 C55.57 193.77 58.57 192.88 66.90 190.20 C75.23 187.52 91.98 181.87 100.00 179.40 C108.02 176.93 110.00 176.80 115.00 175.40 C120.00 174.00 125.00 172.53 130.00 171.00 C135.00 169.47 140.00 167.65 145.00 166.20 C150.00 164.75 154.83 163.50 160.00 162.30 C165.17 161.10 171.00 159.80 176.00 159.00 C181.00 158.20 187.67 157.75 190.00 157.50 L190 269 L0 269 Z" fill="#ae6e40"/><path d="M247.7 79 C246.97 79.38 245.52 80.38 243.30 81.30 C241.08 82.22 238.37 83.35 234.40 84.50 C230.43 85.65 224.47 87.17 219.50 88.20 C214.53 89.23 209.57 90.08 204.60 90.70 C199.63 91.32 193.63 91.60 189.70 91.90 C185.77 92.20 183.02 92.30 181.00 92.50 C178.98 92.70 178.37 92.80 177.60 93.10 C176.83 93.40 176.37 93.87 176.40 94.30 C176.43 94.73 176.82 95.10 177.80 95.70 C178.78 96.30 180.32 97.03 182.30 97.90 C184.28 98.77 185.98 99.40 189.70 100.90 C193.42 102.40 199.63 104.92 204.60 106.90 C209.57 108.88 214.53 110.58 219.50 112.80 C224.47 115.02 229.45 117.47 234.40 120.20 C239.35 122.93 244.75 126.22 249.20 129.20 C253.65 132.18 257.97 135.50 261.10 138.10 C264.23 140.70 266.42 142.88 268.00 144.80 C269.58 146.72 270.30 148.30 270.60 149.60 C270.90 150.90 270.38 151.77 269.80 152.60 C269.22 153.43 268.55 154.03 267.10 154.60 C265.65 155.17 264.08 155.65 261.10 156.00 C258.12 156.35 255.22 156.63 249.20 156.70 C243.18 156.77 232.53 156.53 225.00 156.40 C217.47 156.27 210.00 155.83 204.00 155.90 C198.00 155.97 193.83 156.13 189.00 156.80 C184.17 157.47 179.83 158.53 175.00 159.90 C170.17 161.27 165.00 163.07 160.00 165.00 C155.00 166.93 150.00 168.83 145.00 171.50 C140.00 174.17 135.00 177.35 130.00 181.00 C125.00 184.65 120.00 189.15 115.00 193.40 C110.00 197.65 105.17 202.70 100.00 206.50 C94.83 210.30 88.17 214.02 84.00 216.20 C79.83 218.38 78.67 218.57 75.00 219.60 C71.33 220.63 66.17 221.68 62.00 222.40 C57.83 223.12 56.17 223.67 50.00 223.90 C43.83 224.13 33.33 224.27 25.00 223.80 C16.67 223.33 4.17 221.55 0.00 221.10 L0 269 L403.5 269 L403.5 144.2 C398.45 142.55 383.20 137.93 373.20 134.30 C363.20 130.67 353.42 126.62 343.50 122.40 C333.58 118.18 323.62 113.58 313.70 109.00 C303.78 104.42 292.95 99.00 284.00 94.90 C275.05 90.80 266.05 87.05 260.00 84.40 C253.95 81.75 249.75 79.90 247.70 79.00 Z" fill="#5a3622"/></svg><div class="win fm"><div class="hb"><span class="nav" style="left:4.2px">&#8249;</span><span class="nav" style="left:10.6px">&#8250;</span><span class="pth" style="left:18.2px">Downloads</span><span class="pth" style="left:41.2px">Colloid-gtk-theme</span><span class="pth" style="left:76px">src</span><span class="pbtn" style="left:83.6px">assets <em>&#9662;</em></span><i class="hi r" style="left:122.4px"></i><i class="hi l" style="left:130.2px"></i><i class="hi v" style="left:137.4px"></i><i class="hi m" style="left:144.6px"></i><i class="wb" style="left:154.2px"></i><i class="wb" style="left:159.7px"></i><i class="wb" style="left:165.2px"></i></div><div class="sb"><div class="sr" style="top:3.30px"><i class="si c"></i>Recent</div><div class="sr" style="top:9.50px"><i class="si s"></i>Starred</div><div class="sr" style="top:16.00px"><i class="si h"></i>Home</div><div class="sr" style="top:22.50px"><i class="si t"></i>Trash</div><div class="sr" style="top:30.20px"><i class="si d"></i>Documents</div><div class="sr" style="top:36.50px"><i class="si d"></i>Downloads</div><div class="sr" style="top:42.80px"><i class="si p"></i>Other Locations</div></div><div class="fo" style="left:41.00px;top:14.90px"><svg viewBox="0 0 31 25"><path d="M0 2.6 Q0 0.4 2.2 0.4 L9.4 0.4 Q10.8 0.4 11.6 1.6 L12.8 3.4 L28.8 3.4 Q31 3.4 31 5.6 L31 22.6 Q31 24.8 28.8 24.8 L2.2 24.8 Q0 24.8 0 22.6Z" fill="var(--fold2)"/><path d="M0 6.6 Q0 5.2 1.6 5.2 L29.4 5.2 Q31 5.2 31 6.6 L31 22.6 Q31 24.8 28.8 24.8 L2.2 24.8 Q0 24.8 0 22.6Z" fill="var(--fold1)"/></svg><span>cinnamon</span></div><div class="fo" style="left:80.30px;top:14.90px"><svg viewBox="0 0 31 25"><path d="M0 2.6 Q0 0.4 2.2 0.4 L9.4 0.4 Q10.8 0.4 11.6 1.6 L12.8 3.4 L28.8 3.4 Q31 3.4 31 5.6 L31 22.6 Q31 24.8 28.8 24.8 L2.2 24.8 Q0 24.8 0 22.6Z" fill="var(--fold2)"/><path d="M0 6.6 Q0 5.2 1.6 5.2 L29.4 5.2 Q31 5.2 31 6.6 L31 22.6 Q31 24.8 28.8 24.8 L2.2 24.8 Q0 24.8 0 22.6Z" fill="var(--fold1)"/></svg><span>gnome-shell</span></div><div class="fo" style="left:120.10px;top:14.90px"><svg viewBox="0 0 31 25"><path d="M0 2.6 Q0 0.4 2.2 0.4 L9.4 0.4 Q10.8 0.4 11.6 1.6 L12.8 3.4 L28.8 3.4 Q31 3.4 31 5.6 L31 22.6 Q31 24.8 28.8 24.8 L2.2 24.8 Q0 24.8 0 22.6Z" fill="var(--fold2)"/><path d="M0 6.6 Q0 5.2 1.6 5.2 L29.4 5.2 Q31 5.2 31 6.6 L31 22.6 Q31 24.8 28.8 24.8 L2.2 24.8 Q0 24.8 0 22.6Z" fill="var(--fold1)"/></svg><span>gtk</span></div><div class="fo" style="left:41.00px;top:40.60px"><svg viewBox="0 0 31 25"><path d="M0 2.6 Q0 0.4 2.2 0.4 L9.4 0.4 Q10.8 0.4 11.6 1.6 L12.8 3.4 L28.8 3.4 Q31 3.4 31 5.6 L31 22.6 Q31 24.8 28.8 24.8 L2.2 24.8 Q0 24.8 0 22.6Z" fill="var(--fold2)"/><path d="M0 6.6 Q0 5.2 1.6 5.2 L29.4 5.2 Q31 5.2 31 6.6 L31 22.6 Q31 24.8 28.8 24.8 L2.2 24.8 Q0 24.8 0 22.6Z" fill="var(--fold1)"/></svg><span>gtk-2.0</span></div><div class="fo" style="left:80.30px;top:40.60px"><svg viewBox="0 0 31 25"><path d="M0 2.6 Q0 0.4 2.2 0.4 L9.4 0.4 Q10.8 0.4 11.6 1.6 L12.8 3.4 L28.8 3.4 Q31 3.4 31 5.6 L31 22.6 Q31 24.8 28.8 24.8 L2.2 24.8 Q0 24.8 0 22.6Z" fill="var(--fold2)"/><path d="M0 6.6 Q0 5.2 1.6 5.2 L29.4 5.2 Q31 5.2 31 6.6 L31 22.6 Q31 24.8 28.8 24.8 L2.2 24.8 Q0 24.8 0 22.6Z" fill="var(--fold1)"/></svg><span>metacity-1</span></div><div class="fo" style="left:120.10px;top:40.60px"><svg viewBox="0 0 31 25"><path d="M0 2.6 Q0 0.4 2.2 0.4 L9.4 0.4 Q10.8 0.4 11.6 1.6 L12.8 3.4 L28.8 3.4 Q31 3.4 31 5.6 L31 22.6 Q31 24.8 28.8 24.8 L2.2 24.8 Q0 24.8 0 22.6Z" fill="var(--fold2)"/><path d="M0 6.6 Q0 5.2 1.6 5.2 L29.4 5.2 Q31 5.2 31 6.6 L31 22.6 Q31 24.8 28.8 24.8 L2.2 24.8 Q0 24.8 0 22.6Z" fill="var(--fold1)"/></svg><span>xfwm4</span></div></div><div class="win tm"><div class="hb"><span class="nav" style="left:3.6px">&#8249;</span><span class="nav" style="left:9px">&#8250;</span><span class="ttl">fran@mate:~/Downloads</span><i class="hi r" style="left:137.4px"></i><i class="hi m" style="left:145.4px"></i><i class="wb" style="left:154.0px"></i><i class="wb" style="left:159.7px"></i><i class="wb" style="left:165.3px"></i></div><div class="body"><i class="brk"></i><i class="cur"></i><svg class="seg" viewBox="0 0 56.2 5.7" preserveAspectRatio="none"><path d="M0 0 L10.4 0 L8.6 5.7 L0 5.7Z" fill="var(--osbg)"/><path d="M11 0 L54 0 L56.2 2.85 L54 5.7 L9.2 5.7Z" fill="#3465a4"/><path d="M13.8 1.7 h1.1 l0.4 0.5 h1.6 v2 h-3.1Z" fill="#fff"/></svg><span class="os"><svg viewBox="0 0 10 10"><circle cx="5" cy="5" r="3.4" fill="none" stroke="currentColor" stroke-width="1.7"/><circle cx="5" cy="5" r="1" fill="currentColor"/></svg></span><span class="segt">~/Downloads</span><svg class="rseg" viewBox="0 0 65 5.9" preserveAspectRatio="none"><path d="M2.6 0 L13.6 0 L11.2 5.9 L2.6 5.9 L0 2.95Z" fill="var(--rs1)"/><path d="M13.9 0 L65 0 L65 5.9 L11.5 5.9Z" fill="var(--rs2)"/><path d="M5.2 3 l1.1 1.1 l2.2 -2.4" fill="none" stroke="#6f9a3c" stroke-width="0.55"/><circle cx="61.2" cy="2.95" r="1.35" fill="none" stroke="#333" stroke-width="0.5"/><path d="M61.2 2.1 V3 H61.9" fill="none" stroke="#333" stroke-width="0.35"/></svg><span class="rsegt">at 06:08:11 PM</span><i class="scr"></i><i class="thumb"></i></div></div><div class="win vs"><div class="tbar"><span>best.py - 2022 - Visual Studio Code</span><i class="cb y" style="left:178.3px"></i><i class="cb g" style="left:183.9px"></i><i class="cb r" style="left:189.5px"></i></div><div class="menu"><span style="left:1.2px">File</span><span style="left:10.2px">Edit</span><span style="left:19.2px">Selection</span><span style="left:37.6px">View</span><span style="left:48.2px">Go</span><span style="left:56.2px">Run</span><span style="left:66.2px">Terminal</span><span style="left:82.4px">Help</span></div><div class="ab"><i class="a1" style="top:2.2px"></i><i class="a2" style="top:14.2px"></i><i class="a3" style="top:26.4px"></i><i class="a4" style="top:37.6px"></i><i class="a5" style="top:183.2px"></i><i class="a6" style="top:194.4px"></i></div><div class="tabs"><div class="tab"><i class="py"></i>best.py<em>&#215;</em></div><span class="tact">&#9655;<small>&#8964;</small>&nbsp; &nbsp;&#9707;&nbsp; &nbsp;&#8943;</span></div><div class="bc"><i class="py"></i>best.py &#8250; <i class="cube"></i>read_input</div><div class="ed"><i class="cl" style="top:92.47px"></i><div class="ln"><div>22</div><div>23</div><div>24</div><div>25</div><div>26</div><div>27</div><div>28</div><div>29</div><div>30</div><div>31</div><div>32</div><div>33</div><div>34</div><div>35</div><div>36</div><div>37</div><div>38</div><div>39</div><div>&nbsp;</div><div>40</div><div class="c">41</div><div>42</div><div>43</div><div>44</div><div>45</div><div>&nbsp;</div><div>46</div><div>47</div><div>48</div><div>&nbsp;</div><div>49</div><div>50</div><div>51</div><div>52</div><div>53</div><div>54</div><div>55</div><div>56</div><div>57</div><div>58</div><div>59</div></div><pre class="code"><div>to_test = [<b class="s">"c"</b>]</div><div>n_proc  = <b class="n">6</b></div><div>&nbsp;</div><div><b class="k">def</b> <b class="f">read_input</b>(name):</div><div>    f = <b class="f">open</b>(name, <b class="s">"r"</b>)</div><div>&nbsp;</div><div>    contributors_partitions = {}</div><div>    contributors = {}</div><div>    c, p = [<b class="f">int</b>(e) <b class="k">for</b> e <b class="k">in</b> f.<b class="f">readline</b>().<b class="f">split</b>()]</div><div>&nbsp;</div><div>    <b class="k">for</b> _ <b class="k">in</b> <b class="f">range</b>(c):</div><div>        name, skills = f.<b class="f">readline</b>().<b class="f">split</b>()</div><div>        skills = <b class="f">int</b>(skills)</div><div>        contributors[name] = {}</div><div>        <b class="k">for</b> _ <b class="k">in</b> <b class="f">range</b>(skills):</div><div>            skill, level = f.<b class="f">readline</b>().<b class="f">split</b>()</div><div>            contributors[name][skill] = <b class="f">int</b>(level)</div><div>            contributors_partitions[skill] = contributors_partitions.get</div><div>            (skill, []) + [name]</div><div>&nbsp;</div><div>    projects = {}</div><div>    <b class="k">for</b> _ <b class="k">in</b> <b class="f">range</b>(p):</div><div>        line = f.<b class="f">readline</b>().<b class="f">split</b>()</div><div>        values = [<b class="f">int</b>(e) <b class="k">for</b> e <b class="k">in</b> line[<b class="n">1</b>:]]</div><div>        projects[line[<b class="n">0</b>]] = <b class="f">dict</b>(<b class="f">zip</b>([<b class="s">"duration"</b>, <b class="s">"score"</b>, <b class="s">"best_before"</b>,</div><div>        <b class="s">"roles"</b>], values))</div><div>        <b class="k">for</b> _ <b class="k">in</b> <b class="f">range</b>(values[-<b class="n">1</b>]):</div><div>            skill, level = f.<b class="f">readline</b>().<b class="f">split</b>()</div><div>            projects[line[<b class="n">0</b>]][<b class="s">"skills"</b>] = projects[line[<b class="n">0</b>]].<b class="f">get</b>(<b class="s">"skills"</b>, [])</div><div>            + [(skill, <b class="f">int</b>(level))]</div><div>&nbsp;</div><div>    <b class="k">return</b> contributors, contributors_partitions, projects</div><div>&nbsp;</div><div><b class="k">def</b> <b class="f">write_output</b>(res, path):</div><div>    <b class="f">open</b>(path, <b class="s">"w"</b>).<b class="f">write</b>(prepare_output(res))</div><div>&nbsp;</div><div><b class="k">def</b> <b class="f">prepare_output</b>(out):</div><div>    res = <b class="s">f"{len(out)}\n"</b></div><div>    <b class="k">for</b> k, v <b class="k">in</b> out.<b class="f">items</b>():</div><div>        res += <b class="s">f"{k}\n"</b></div><div>        res += <b class="s">f" "</b>.<b class="f">join</b>(v) + <b class="s">"\n"</b></div></pre><i class="vsb"></i></div><div class="stat"><span style="left:2.4px">&#8855; 0 &#9651; 0</span><span style="left:76.3px">Ln 41, Col 18</span><span style="left:98.2px">Spaces: 4</span><span style="left:114.1px">UTF-8</span><span style="left:126.4px">LF</span><span style="left:133.4px">Python</span><span style="left:146.1px">3.9.10 64-bit</span><span style="left:165.6px">&#8856; Pylint</span><span style="left:181.4px">&#9738;</span><span style="left:189.2px">&#9993;</span></div></div><div class="tb"><span class="tb-app"><svg viewBox="0 0 24 24"><rect width="24" height="24" rx="5" fill="#4b5059"/><path d="M16 5 L19 6.4 V17.6 L16 19 L8 12.6 L6 14.2 L5 13.6 V10.4 L6 9.8 L8 11.4Z" fill="#2f9be6"/></svg></span><span class="tb-title">Visual Studio Code</span><svg class="tb-i" style="left:316.4px" viewBox="0 0 10 10"><path d="M6.5 1 A4 4 0 1 0 9 7 A3.4 3.4 0 0 1 6.5 1Z" fill="currentColor"/></svg><i class="tb-dot" style="left:326px"></i><span class="tb-clock">Thursday May 12, 18:09</span><i class="tb-s" style="left:380.2px;width:1.8px"></i><i class="tb-s" style="left:385.2px;width:2.4px"></i><i class="tb-s b" style="left:390.4px;width:3px"></i><span class="tb-pct">99 %</span></div><div class="dock" style="left:140.25px;width:123.00px"><span class="ic" style="left:3.00px"><svg viewBox="0 0 24 24"><rect width="24" height="24" rx="5.5" fill="#fdf4f1"/><g transform="translate(12 12.4) scale(1.13) translate(-12 -12.4)"><circle cx="12" cy="12.6" r="7.4" fill="#f7772b"/><path d="M5.2 9.5 C6 6 9 4.2 12.4 4.6 C13.6 3.6 14.6 3.4 15.4 3.6 C15.2 4.6 15.6 5.4 16.6 6.2 C18.6 7.8 19.5 10.2 19.3 12.9 C19 17 15.8 20 12 20 C15 18.6 16.4 15.6 15.4 12.6 C14.6 10.2 12 9.2 10 10.2 C8.8 9 7 8.6 5.2 9.5Z" fill="#ffae38"/><circle cx="11.6" cy="13.2" r="3.7" fill="#9a3fd6"/><path d="M4.7 12 C5 9 6.8 7 9 6.4 C8 8 8.4 9.6 9.6 10.6 C8 11.4 7.6 13.6 8.6 15.4 C9.6 17.2 11.6 17.8 13.4 17.2 C12 19.4 8.4 19.4 6.4 17.4 C5 16 4.5 14 4.7 12Z" fill="#f0472e"/></g></svg></span><span class="ic" style="left:20.50px"><svg viewBox="0 0 24 24"><rect width="24" height="24" rx="5.5" fill="#fbfcfe"/><path d="M4 6.8 Q4 5.4 5.4 5.4 L9.4 5.4 Q10.2 5.4 10.7 6.1 L11.4 7 L18.6 7 Q20 7 20 8.4 L20 16.8 Q20 18.2 18.6 18.2 L5.4 18.2 Q4 18.2 4 16.8Z" fill="#3f8fd6"/><path d="M4 9.4 L20 9.4 L20 16.8 Q20 18.2 18.6 18.2 L5.4 18.2 Q4 18.2 4 16.8Z" fill="#66b7f0"/></svg></span><i class="dot" style="left:26.00px"></i><span class="ic" style="left:38.00px"><svg viewBox="0 0 24 24"><rect width="24" height="24" rx="5.5" fill="#2ba3e2"/><path d="M4.6 11.8 L18.6 6.2 Q19.6 5.9 19.4 7 L17.2 17.6 Q17 18.6 16 18 L12.4 15.4 L10.6 17.2 Q10 17.7 9.9 16.9 L9.6 13.8 L16.2 8.4 L8.2 13.2 L4.8 12.6 Q4 12.2 4.6 11.8Z" fill="#fff"/></svg></span><span class="ic" style="left:55.50px"><svg viewBox="0 0 24 24"><rect width="24" height="24" rx="5.5" fill="#2dbd74"/><path d="M6 5.5 L8.4 5.5 L8.4 12 L15.6 5.5 L18.6 5.5 L10.6 12.6 L12.4 14.8 L9.8 14.8 L8.4 13.2 L8.4 17.4 L6 17.4Z" fill="#fff"/><rect x="12.2" y="15.4" width="6.6" height="2" rx="0.6" fill="#fff"/></svg></span><span class="ic" style="left:73.00px"><svg viewBox="0 0 24 24"><defs><linearGradient id="ijgbl" x1="0" y1="0" x2="1" y2="0"><stop offset="0" stop-color="#f5376a"/><stop offset="0.4" stop-color="#b044c8"/><stop offset="1" stop-color="#1673f5"/></linearGradient><linearGradient id="ijobl" x1="0" y1="1" x2="0.55" y2="0.35"><stop offset="0" stop-color="#fb8a2a"/><stop offset="0.55" stop-color="#fb8a2a" stop-opacity="0.7"/><stop offset="1" stop-color="#fb8a2a" stop-opacity="0"/></linearGradient></defs><rect width="24" height="24" rx="5" fill="url(#ijgbl)"/><rect width="24" height="24" rx="5" fill="url(#ijobl)"/><rect x="3.8" y="3.8" width="16.4" height="16.4" rx="1" fill="#0b0b0f"/><path d="M6.6 6.8 H11 V8.4 H9.7 V12 H11 V13.6 H6.6 V12 H7.9 V8.4 H6.6Z" fill="#fff"/><path d="M14.4 6.8 H16.2 V11.4 Q16.2 13.8 13.8 13.8 Q12.4 13.8 11.7 12.8 L12.9 11.6 Q13.3 12.2 13.8 12.2 Q14.4 12.2 14.4 11.2Z" fill="#fff"/><rect x="6.6" y="16.2" width="6" height="1.3" fill="#fff"/></svg></span><i class="act" style="left:88.20px"></i><span class="ic" style="left:90.50px"><svg viewBox="0 0 24 24"><rect width="24" height="24" rx="5.5" fill="#4d525b"/><path d="M16.6 4.4 L19.8 5.9 V18.1 L16.6 19.6 L7.8 13 L5.8 14.6 L4.4 13.9 V10.1 L5.8 9.4 L7.8 11 Z M16.6 8.6 L11.8 12 L16.6 15.4Z" fill="#2b8fdc" fill-rule="evenodd"/><path d="M16.6 4.4 L19.8 5.9 V18.1 L16.6 19.6Z" fill="#45a8ee"/></svg></span><i class="dot" style="left:96.00px"></i><span class="ic" style="left:108.00px"><svg viewBox="0 0 24 24"><rect width="24" height="24" rx="5.5" fill="#3b3f46"/><rect x="0.6" y="0.6" width="22.8" height="22.8" rx="5" fill="none" stroke="#8d9096" stroke-width="0.9"/><path d="M5.2 6.4 L8.4 8.8 L5.2 11.2" fill="none" stroke="#e9e9e9" stroke-width="1.3"/><rect x="9.4" y="10.6" width="3.4" height="1.1" fill="#e9e9e9"/></svg></span><i class="dot" style="left:113.50px"></i></div></div>
<div class="q br dark" style="--bar:#1d1f27;--bartext:#e8e8ea;--barmuted:#8a8d96;--dock:rgba(36,40,50,0.7);--dockactive:rgba(150,156,172,0.42)"><svg class="wp" viewBox="0 0 403.5 269" preserveAspectRatio="none"><rect width="403.5" height="269" fill="#485062"/><path d="M0 124.6 L2 124.4 L3.6 125.4 L5 127 L7 127.2 L9 128.4 L11 128.2 L13 128.8 L16.5 128.3 L16.5 131 L0 137 Z" fill="#2a2e38"/><path d="M375.5 134 L377.5 131.4 L380.5 131 L384 128.6 Q386.6 126.2 389 128.4 Q391 129 393 127.6 Q395.5 125.8 398 127.6 L400.5 128.2 L403.5 127.4 L403.5 146 Z" fill="#2a2e38"/><path d="M0 134 C2.50 133.20 10.05 130.78 15.00 129.20 C19.95 127.62 23.87 126.50 29.70 124.50 C35.53 122.50 41.67 120.40 50.00 117.20 C58.33 114.00 69.78 109.13 79.70 105.30 C89.62 101.47 99.58 98.03 109.50 94.20 C119.42 90.37 131.77 85.40 139.20 82.30 C146.63 79.20 150.88 76.97 154.10 75.60 C157.32 74.23 156.93 74.47 158.50 74.10 C160.07 73.73 162.67 73.52 163.50 73.40 C164.33 73.45 166.62 73.52 168.50 73.70 C170.38 73.88 171.68 73.97 174.80 74.50 C177.92 75.03 183.07 76.20 187.20 76.90 C191.33 77.60 195.47 78.23 199.60 78.70 C203.73 79.17 207.88 79.45 212.00 79.70 C216.12 79.95 220.18 80.10 224.30 80.20 C228.42 80.30 233.58 80.35 236.70 80.30 C239.82 80.25 241.17 80.12 243.00 79.90 C244.83 79.68 246.92 79.15 247.70 79.00 L247.7 269 L0 269 Z" fill="#373c4b"/><path d="M0 151.2 L7.4 148.8 L50 136.2 L79.7 125.2 L109.5 115.6 L139.2 105.9 L169 95.8 L177.2 94.2 L230 100 L275 140 L275 269 L0 269 Z" fill="#3e4455"/><path d="M0 209.8 C5.58 208.27 25.17 202.98 33.50 200.60 C41.83 198.22 44.43 197.23 50.00 195.50 C55.57 193.77 58.57 192.88 66.90 190.20 C75.23 187.52 91.98 181.87 100.00 179.40 C108.02 176.93 110.00 176.80 115.00 175.40 C120.00 174.00 125.00 172.53 130.00 171.00 C135.00 169.47 140.00 167.65 145.00 166.20 C150.00 164.75 154.83 163.50 160.00 162.30 C165.17 161.10 171.00 159.80 176.00 159.00 C181.00 158.20 187.67 157.75 190.00 157.50 L190 269 L0 269 Z" fill="#465067"/><path d="M247.7 79 C246.97 79.38 245.52 80.38 243.30 81.30 C241.08 82.22 238.37 83.35 234.40 84.50 C230.43 85.65 224.47 87.17 219.50 88.20 C214.53 89.23 209.57 90.08 204.60 90.70 C199.63 91.32 193.63 91.60 189.70 91.90 C185.77 92.20 183.02 92.30 181.00 92.50 C178.98 92.70 178.37 92.80 177.60 93.10 C176.83 93.40 176.37 93.87 176.40 94.30 C176.43 94.73 176.82 95.10 177.80 95.70 C178.78 96.30 180.32 97.03 182.30 97.90 C184.28 98.77 185.98 99.40 189.70 100.90 C193.42 102.40 199.63 104.92 204.60 106.90 C209.57 108.88 214.53 110.58 219.50 112.80 C224.47 115.02 229.45 117.47 234.40 120.20 C239.35 122.93 244.75 126.22 249.20 129.20 C253.65 132.18 257.97 135.50 261.10 138.10 C264.23 140.70 266.42 142.88 268.00 144.80 C269.58 146.72 270.30 148.30 270.60 149.60 C270.90 150.90 270.38 151.77 269.80 152.60 C269.22 153.43 268.55 154.03 267.10 154.60 C265.65 155.17 264.08 155.65 261.10 156.00 C258.12 156.35 255.22 156.63 249.20 156.70 C243.18 156.77 232.53 156.53 225.00 156.40 C217.47 156.27 210.00 155.83 204.00 155.90 C198.00 155.97 193.83 156.13 189.00 156.80 C184.17 157.47 179.83 158.53 175.00 159.90 C170.17 161.27 165.00 163.07 160.00 165.00 C155.00 166.93 150.00 168.83 145.00 171.50 C140.00 174.17 135.00 177.35 130.00 181.00 C125.00 184.65 120.00 189.15 115.00 193.40 C110.00 197.65 105.17 202.70 100.00 206.50 C94.83 210.30 88.17 214.02 84.00 216.20 C79.83 218.38 78.67 218.57 75.00 219.60 C71.33 220.63 66.17 221.68 62.00 222.40 C57.83 223.12 56.17 223.67 50.00 223.90 C43.83 224.13 33.33 224.27 25.00 223.80 C16.67 223.33 4.17 221.55 0.00 221.10 L0 269 L403.5 269 L403.5 144.2 C398.45 142.55 383.20 137.93 373.20 134.30 C363.20 130.67 353.42 126.62 343.50 122.40 C333.58 118.18 323.62 113.58 313.70 109.00 C303.78 104.42 292.95 99.00 284.00 94.90 C275.05 90.80 266.05 87.05 260.00 84.40 C253.95 81.75 249.75 79.90 247.70 79.00 Z" fill="#2e3340"/></svg><div class="win fm"><div class="hb"><span class="nav" style="left:4.2px">&#8249;</span><span class="nav" style="left:10.6px">&#8250;</span><span class="pth" style="left:18.2px">Downloads</span><span class="pth" style="left:41.2px">Colloid-gtk-theme</span><span class="pth" style="left:76px">src</span><span class="pbtn" style="left:83.6px">assets <em>&#9662;</em></span><i class="hi r" style="left:122.4px"></i><i class="hi l" style="left:130.2px"></i><i class="hi v" style="left:137.4px"></i><i class="hi m" style="left:144.6px"></i><i class="wb" style="left:154.2px"></i><i class="wb" style="left:159.7px"></i><i class="wb" style="left:165.2px"></i></div><div class="sb"><div class="sr" style="top:3.30px"><i class="si c"></i>Recent</div><div class="sr" style="top:9.50px"><i class="si s"></i>Starred</div><div class="sr" style="top:16.00px"><i class="si h"></i>Home</div><div class="sr" style="top:22.50px"><i class="si t"></i>Trash</div><div class="sr" style="top:30.20px"><i class="si d"></i>Documents</div><div class="sr" style="top:36.50px"><i class="si d"></i>Downloads</div><div class="sr" style="top:42.80px"><i class="si p"></i>Other Locations</div></div><div class="fo" style="left:41.00px;top:14.90px"><svg viewBox="0 0 31 25"><path d="M0 2.6 Q0 0.4 2.2 0.4 L9.4 0.4 Q10.8 0.4 11.6 1.6 L12.8 3.4 L28.8 3.4 Q31 3.4 31 5.6 L31 22.6 Q31 24.8 28.8 24.8 L2.2 24.8 Q0 24.8 0 22.6Z" fill="var(--fold2)"/><path d="M0 6.6 Q0 5.2 1.6 5.2 L29.4 5.2 Q31 5.2 31 6.6 L31 22.6 Q31 24.8 28.8 24.8 L2.2 24.8 Q0 24.8 0 22.6Z" fill="var(--fold1)"/></svg><span>cinnamon</span></div><div class="fo" style="left:80.30px;top:14.90px"><svg viewBox="0 0 31 25"><path d="M0 2.6 Q0 0.4 2.2 0.4 L9.4 0.4 Q10.8 0.4 11.6 1.6 L12.8 3.4 L28.8 3.4 Q31 3.4 31 5.6 L31 22.6 Q31 24.8 28.8 24.8 L2.2 24.8 Q0 24.8 0 22.6Z" fill="var(--fold2)"/><path d="M0 6.6 Q0 5.2 1.6 5.2 L29.4 5.2 Q31 5.2 31 6.6 L31 22.6 Q31 24.8 28.8 24.8 L2.2 24.8 Q0 24.8 0 22.6Z" fill="var(--fold1)"/></svg><span>gnome-shell</span></div><div class="fo" style="left:120.10px;top:14.90px"><svg viewBox="0 0 31 25"><path d="M0 2.6 Q0 0.4 2.2 0.4 L9.4 0.4 Q10.8 0.4 11.6 1.6 L12.8 3.4 L28.8 3.4 Q31 3.4 31 5.6 L31 22.6 Q31 24.8 28.8 24.8 L2.2 24.8 Q0 24.8 0 22.6Z" fill="var(--fold2)"/><path d="M0 6.6 Q0 5.2 1.6 5.2 L29.4 5.2 Q31 5.2 31 6.6 L31 22.6 Q31 24.8 28.8 24.8 L2.2 24.8 Q0 24.8 0 22.6Z" fill="var(--fold1)"/></svg><span>gtk</span></div><div class="fo" style="left:41.00px;top:40.60px"><svg viewBox="0 0 31 25"><path d="M0 2.6 Q0 0.4 2.2 0.4 L9.4 0.4 Q10.8 0.4 11.6 1.6 L12.8 3.4 L28.8 3.4 Q31 3.4 31 5.6 L31 22.6 Q31 24.8 28.8 24.8 L2.2 24.8 Q0 24.8 0 22.6Z" fill="var(--fold2)"/><path d="M0 6.6 Q0 5.2 1.6 5.2 L29.4 5.2 Q31 5.2 31 6.6 L31 22.6 Q31 24.8 28.8 24.8 L2.2 24.8 Q0 24.8 0 22.6Z" fill="var(--fold1)"/></svg><span>gtk-2.0</span></div><div class="fo" style="left:80.30px;top:40.60px"><svg viewBox="0 0 31 25"><path d="M0 2.6 Q0 0.4 2.2 0.4 L9.4 0.4 Q10.8 0.4 11.6 1.6 L12.8 3.4 L28.8 3.4 Q31 3.4 31 5.6 L31 22.6 Q31 24.8 28.8 24.8 L2.2 24.8 Q0 24.8 0 22.6Z" fill="var(--fold2)"/><path d="M0 6.6 Q0 5.2 1.6 5.2 L29.4 5.2 Q31 5.2 31 6.6 L31 22.6 Q31 24.8 28.8 24.8 L2.2 24.8 Q0 24.8 0 22.6Z" fill="var(--fold1)"/></svg><span>metacity-1</span></div><div class="fo" style="left:120.10px;top:40.60px"><svg viewBox="0 0 31 25"><path d="M0 2.6 Q0 0.4 2.2 0.4 L9.4 0.4 Q10.8 0.4 11.6 1.6 L12.8 3.4 L28.8 3.4 Q31 3.4 31 5.6 L31 22.6 Q31 24.8 28.8 24.8 L2.2 24.8 Q0 24.8 0 22.6Z" fill="var(--fold2)"/><path d="M0 6.6 Q0 5.2 1.6 5.2 L29.4 5.2 Q31 5.2 31 6.6 L31 22.6 Q31 24.8 28.8 24.8 L2.2 24.8 Q0 24.8 0 22.6Z" fill="var(--fold1)"/></svg><span>xfwm4</span></div></div><div class="win tm"><div class="hb"><span class="nav" style="left:3.6px">&#8249;</span><span class="nav" style="left:9px">&#8250;</span><span class="ttl">fran@mate:~/Downloads</span><i class="hi r" style="left:137.4px"></i><i class="hi m" style="left:145.4px"></i><i class="wb" style="left:154.0px"></i><i class="wb" style="left:159.7px"></i><i class="wb" style="left:165.3px"></i></div><div class="body"><i class="brk"></i><i class="cur"></i><svg class="seg" viewBox="0 0 56.2 5.7" preserveAspectRatio="none"><path d="M0 0 L10.4 0 L8.6 5.7 L0 5.7Z" fill="var(--osbg)"/><path d="M11 0 L54 0 L56.2 2.85 L54 5.7 L9.2 5.7Z" fill="#3465a4"/><path d="M13.8 1.7 h1.1 l0.4 0.5 h1.6 v2 h-3.1Z" fill="#fff"/></svg><span class="os"><svg viewBox="0 0 10 10"><circle cx="5" cy="5" r="3.4" fill="none" stroke="currentColor" stroke-width="1.7"/><circle cx="5" cy="5" r="1" fill="currentColor"/></svg></span><span class="segt">~/Downloads</span><svg class="rseg" viewBox="0 0 65 5.9" preserveAspectRatio="none"><path d="M2.6 0 L13.6 0 L11.2 5.9 L2.6 5.9 L0 2.95Z" fill="var(--rs1)"/><path d="M13.9 0 L65 0 L65 5.9 L11.5 5.9Z" fill="var(--rs2)"/><path d="M5.2 3 l1.1 1.1 l2.2 -2.4" fill="none" stroke="#6f9a3c" stroke-width="0.55"/><circle cx="61.2" cy="2.95" r="1.35" fill="none" stroke="#333" stroke-width="0.5"/><path d="M61.2 2.1 V3 H61.9" fill="none" stroke="#333" stroke-width="0.35"/></svg><span class="rsegt">at 06:08:11 PM</span><i class="scr"></i><i class="thumb"></i></div></div><div class="win vs"><div class="tbar"><span>best.py - 2022 - Visual Studio Code</span><i class="cb y" style="left:178.3px"></i><i class="cb g" style="left:183.9px"></i><i class="cb r" style="left:189.5px"></i></div><div class="menu"><span style="left:1.2px">File</span><span style="left:10.2px">Edit</span><span style="left:19.2px">Selection</span><span style="left:37.6px">View</span><span style="left:48.2px">Go</span><span style="left:56.2px">Run</span><span style="left:66.2px">Terminal</span><span style="left:82.4px">Help</span></div><div class="ab"><i class="a1" style="top:2.2px"></i><i class="a2" style="top:14.2px"></i><i class="a3" style="top:26.4px"></i><i class="a4" style="top:37.6px"></i><i class="a5" style="top:183.2px"></i><i class="a6" style="top:194.4px"></i></div><div class="tabs"><div class="tab"><i class="py"></i>best.py<em>&#215;</em></div><span class="tact">&#9655;<small>&#8964;</small>&nbsp; &nbsp;&#9707;&nbsp; &nbsp;&#8943;</span></div><div class="bc"><i class="py"></i>best.py &#8250; <i class="cube"></i>read_input</div><div class="ed"><i class="cl" style="top:23.12px"></i><div class="ln"><div>22</div><div>23</div><div>24</div><div>25</div><div>26</div><div class="c">27</div><div>28</div><div>29</div><div>30</div><div>31</div><div>32</div><div>33</div><div>34</div><div>35</div><div>36</div><div>37</div><div>38</div><div>39</div><div>&nbsp;</div><div>40</div><div>41</div><div>42</div><div>43</div><div>44</div><div>45</div><div>&nbsp;</div><div>46</div><div>47</div><div>48</div><div>&nbsp;</div><div>49</div><div>50</div><div>51</div><div>52</div><div>53</div><div>54</div><div>55</div><div>56</div><div>57</div><div>58</div><div>59</div></div><pre class="code"><div>to_test = [<b class="s">"c"</b>]</div><div>n_proc  = <b class="n">6</b></div><div>&nbsp;</div><div><b class="k">def</b> <b class="f">read_input</b>(name):</div><div>    f = <b class="f">open</b>(name, <b class="s">"r"</b>)</div><div>&nbsp;</div><div>    contributors_partitions = {}</div><div>    contributors = {}</div><div>    c, p = [<b class="f">int</b>(e) <b class="k">for</b> e <b class="k">in</b> f.<b class="f">readline</b>().<b class="f">split</b>()]</div><div>&nbsp;</div><div>    <b class="k">for</b> _ <b class="k">in</b> <b class="f">range</b>(c):</div><div>        name, skills = f.<b class="f">readline</b>().<b class="f">split</b>()</div><div>        skills = <b class="f">int</b>(skills)</div><div>        contributors[name] = {}</div><div>        <b class="k">for</b> _ <b class="k">in</b> <b class="f">range</b>(skills):</div><div>            skill, level = f.<b class="f">readline</b>().<b class="f">split</b>()</div><div>            contributors[name][skill] = <b class="f">int</b>(level)</div><div>            contributors_partitions[skill] = contributors_partitions.get</div><div>            (skill, []) + [name]</div><div>&nbsp;</div><div>    projects = {}</div><div>    <b class="k">for</b> _ <b class="k">in</b> <b class="f">range</b>(p):</div><div>        line = f.<b class="f">readline</b>().<b class="f">split</b>()</div><div>        values = [<b class="f">int</b>(e) <b class="k">for</b> e <b class="k">in</b> line[<b class="n">1</b>:]]</div><div>        projects[line[<b class="n">0</b>]] = <b class="f">dict</b>(<b class="f">zip</b>([<b class="s">"duration"</b>, <b class="s">"score"</b>, <b class="s">"best_before"</b>,</div><div>        <b class="s">"roles"</b>], values))</div><div>        <b class="k">for</b> _ <b class="k">in</b> <b class="f">range</b>(values[-<b class="n">1</b>]):</div><div>            skill, level = f.<b class="f">readline</b>().<b class="f">split</b>()</div><div>            projects[line[<b class="n">0</b>]][<b class="s">"skills"</b>] = projects[line[<b class="n">0</b>]].<b class="f">get</b>(<b class="s">"skills"</b>, [])</div><div>            + [(skill, <b class="f">int</b>(level))]</div><div>&nbsp;</div><div>    <b class="k">return</b> contributors, contributors_partitions, projects</div><div>&nbsp;</div><div><b class="k">def</b> <b class="f">write_output</b>(res, path):</div><div>    <b class="f">open</b>(path, <b class="s">"w"</b>).<b class="f">write</b>(prepare_output(res))</div><div>&nbsp;</div><div><b class="k">def</b> <b class="f">prepare_output</b>(out):</div><div>    res = <b class="s">f"{len(out)}\n"</b></div><div>    <b class="k">for</b> k, v <b class="k">in</b> out.<b class="f">items</b>():</div><div>        res += <b class="s">f"{k}\n"</b></div><div>        res += <b class="s">f" "</b>.<b class="f">join</b>(v) + <b class="s">"\n"</b></div></pre><i class="vsb"></i></div><div class="stat"><span style="left:2.4px">&#8855; 0 &#9651; 0</span><span style="left:76.3px">Ln 27, Col 1</span><span style="left:98.2px">Spaces: 4</span><span style="left:114.1px">UTF-8</span><span style="left:126.4px">LF</span><span style="left:133.4px">Python</span><span style="left:146.1px">3.9.10 64-bit</span><span style="left:165.6px">&#8856; Pylint</span><span style="left:181.4px">&#9738;</span><span style="left:189.2px">&#9993;</span></div></div><div class="tb"><span class="tb-app"><svg viewBox="0 0 24 24"><rect width="24" height="24" rx="5" fill="#4b5059"/><path d="M16 5 L19 6.4 V17.6 L16 19 L8 12.6 L6 14.2 L5 13.6 V10.4 L6 9.8 L8 11.4Z" fill="#2f9be6"/></svg></span><span class="tb-title">Visual Studio Code</span><svg class="tb-i" style="left:316.4px" viewBox="0 0 10 10"><path d="M6.5 1 A4 4 0 1 0 9 7 A3.4 3.4 0 0 1 6.5 1Z" fill="currentColor"/></svg><i class="tb-dot" style="left:326px"></i><span class="tb-clock">Thursday May 12, 18:08</span><i class="tb-s" style="left:380.2px;width:1.8px"></i><i class="tb-s" style="left:385.2px;width:2.4px"></i><i class="tb-s b" style="left:390.4px;width:3px"></i><span class="tb-pct">99 %</span></div><div class="dock" style="left:140.25px;width:123.00px"><span class="ic" style="left:3.00px"><svg viewBox="0 0 24 24"><rect width="24" height="24" rx="5.5" fill="#fdf4f1"/><g transform="translate(12 12.4) scale(1.13) translate(-12 -12.4)"><circle cx="12" cy="12.6" r="7.4" fill="#f7772b"/><path d="M5.2 9.5 C6 6 9 4.2 12.4 4.6 C13.6 3.6 14.6 3.4 15.4 3.6 C15.2 4.6 15.6 5.4 16.6 6.2 C18.6 7.8 19.5 10.2 19.3 12.9 C19 17 15.8 20 12 20 C15 18.6 16.4 15.6 15.4 12.6 C14.6 10.2 12 9.2 10 10.2 C8.8 9 7 8.6 5.2 9.5Z" fill="#ffae38"/><circle cx="11.6" cy="13.2" r="3.7" fill="#9a3fd6"/><path d="M4.7 12 C5 9 6.8 7 9 6.4 C8 8 8.4 9.6 9.6 10.6 C8 11.4 7.6 13.6 8.6 15.4 C9.6 17.2 11.6 17.8 13.4 17.2 C12 19.4 8.4 19.4 6.4 17.4 C5 16 4.5 14 4.7 12Z" fill="#f0472e"/></g></svg></span><span class="ic" style="left:20.50px"><svg viewBox="0 0 24 24"><rect width="24" height="24" rx="5.5" fill="#fbfcfe"/><path d="M4 6.8 Q4 5.4 5.4 5.4 L9.4 5.4 Q10.2 5.4 10.7 6.1 L11.4 7 L18.6 7 Q20 7 20 8.4 L20 16.8 Q20 18.2 18.6 18.2 L5.4 18.2 Q4 18.2 4 16.8Z" fill="#3f8fd6"/><path d="M4 9.4 L20 9.4 L20 16.8 Q20 18.2 18.6 18.2 L5.4 18.2 Q4 18.2 4 16.8Z" fill="#66b7f0"/></svg></span><i class="dot" style="left:26.00px"></i><span class="ic" style="left:38.00px"><svg viewBox="0 0 24 24"><rect width="24" height="24" rx="5.5" fill="#2ba3e2"/><path d="M4.6 11.8 L18.6 6.2 Q19.6 5.9 19.4 7 L17.2 17.6 Q17 18.6 16 18 L12.4 15.4 L10.6 17.2 Q10 17.7 9.9 16.9 L9.6 13.8 L16.2 8.4 L8.2 13.2 L4.8 12.6 Q4 12.2 4.6 11.8Z" fill="#fff"/></svg></span><span class="ic" style="left:55.50px"><svg viewBox="0 0 24 24"><rect width="24" height="24" rx="5.5" fill="#2dbd74"/><path d="M6 5.5 L8.4 5.5 L8.4 12 L15.6 5.5 L18.6 5.5 L10.6 12.6 L12.4 14.8 L9.8 14.8 L8.4 13.2 L8.4 17.4 L6 17.4Z" fill="#fff"/><rect x="12.2" y="15.4" width="6.6" height="2" rx="0.6" fill="#fff"/></svg></span><span class="ic" style="left:73.00px"><svg viewBox="0 0 24 24"><defs><linearGradient id="ijgbr" x1="0" y1="0" x2="1" y2="0"><stop offset="0" stop-color="#f5376a"/><stop offset="0.4" stop-color="#b044c8"/><stop offset="1" stop-color="#1673f5"/></linearGradient><linearGradient id="ijobr" x1="0" y1="1" x2="0.55" y2="0.35"><stop offset="0" stop-color="#fb8a2a"/><stop offset="0.55" stop-color="#fb8a2a" stop-opacity="0.7"/><stop offset="1" stop-color="#fb8a2a" stop-opacity="0"/></linearGradient></defs><rect width="24" height="24" rx="5" fill="url(#ijgbr)"/><rect width="24" height="24" rx="5" fill="url(#ijobr)"/><rect x="3.8" y="3.8" width="16.4" height="16.4" rx="1" fill="#0b0b0f"/><path d="M6.6 6.8 H11 V8.4 H9.7 V12 H11 V13.6 H6.6 V12 H7.9 V8.4 H6.6Z" fill="#fff"/><path d="M14.4 6.8 H16.2 V11.4 Q16.2 13.8 13.8 13.8 Q12.4 13.8 11.7 12.8 L12.9 11.6 Q13.3 12.2 13.8 12.2 Q14.4 12.2 14.4 11.2Z" fill="#fff"/><rect x="6.6" y="16.2" width="6" height="1.3" fill="#fff"/></svg></span><i class="act" style="left:88.20px"></i><span class="ic" style="left:90.50px"><svg viewBox="0 0 24 24"><rect width="24" height="24" rx="5.5" fill="#4d525b"/><path d="M16.6 4.4 L19.8 5.9 V18.1 L16.6 19.6 L7.8 13 L5.8 14.6 L4.4 13.9 V10.1 L5.8 9.4 L7.8 11 Z M16.6 8.6 L11.8 12 L16.6 15.4Z" fill="#2b8fdc" fill-rule="evenodd"/><path d="M16.6 4.4 L19.8 5.9 V18.1 L16.6 19.6Z" fill="#45a8ee"/></svg></span><i class="dot" style="left:96.00px"></i><span class="ic" style="left:108.00px"><svg viewBox="0 0 24 24"><rect width="24" height="24" rx="5.5" fill="#3b3f46"/><rect x="0.6" y="0.6" width="22.8" height="22.8" rx="5" fill="none" stroke="#8d9096" stroke-width="0.9"/><path d="M5.2 6.4 L8.4 8.8 L5.2 11.2" fill="none" stroke="#e9e9e9" stroke-width="1.3"/><rect x="9.4" y="10.6" width="3.4" height="1.1" fill="#e9e9e9"/></svg></span><i class="dot" style="left:113.50px"></i></div></div>
</div>
</body></html>
